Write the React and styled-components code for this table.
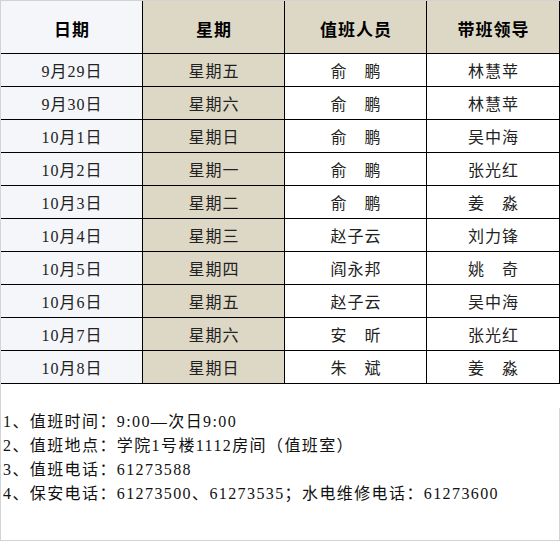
import React from "react";
import styled, { createGlobalStyle } from "styled-components";

const Global = createGlobalStyle`
  html, body { margin: 0; padding: 0; background: #ffffff; }
  * { box-sizing: border-box; }
`;

const Frame = styled.div`
  width: 560px;
  height: 541px;
  border-top: 1px solid #d3d3d3;
  border-left: 1px solid #d3d3d3;
  border-bottom: 1px solid #d3d3d3;
  display: flex;
  flex-direction: column;
  background: #ffffff;
  font-family: "Liberation Serif", "Noto Sans CJK SC", serif;
  color: #1a1a1a;
`;

const Grid = styled.div`
  display: grid;
  grid-template-columns: 142px 142px 142px 133px;
  grid-auto-rows: 33px;
  grid-template-rows: 53px;
`;

const tones = {
  date: "#f4f6fa",
  week: "#ddd8c5",
  plain: "#ffffff",
};

const Cell = styled.div`
  display: flex;
  align-items: center;
  justify-content: center;
  background: ${(p) => tones[p.$tone]};
  border-right: 1px solid #000;
  border-bottom: 1px solid #000;
  font-size: 16px;
  letter-spacing: 1px;
  padding-left: 1px;
  color: #222;
  white-space: pre;
`;

const HeadCell = styled(Cell)`
  font-size: 17px;
  font-weight: 700;
  color: #000;
  padding-top: 2px;
`;

const Notes = styled.div`
  flex: 1;
  display: flex;
  flex-direction: column;
  padding-top: 24px;
`;

const NotesBody = styled.div`
  flex: 1;
  border-right: 1px solid #d3d3d3;
  padding: 2px 0 0 2px;
  font-size: 16px;
  line-height: 24px;
  letter-spacing: 1.4px;
  color: #111;
`;

const Line = styled.div`
  white-space: nowrap;
`;

const rows = [
  ["9月29日", "星期五", "俞　鹏", "林慧苹"],
  ["9月30日", "星期六", "俞　鹏", "林慧苹"],
  ["10月1日", "星期日", "俞　鹏", "吴中海"],
  ["10月2日", "星期一", "俞　鹏", "张光红"],
  ["10月3日", "星期二", "俞　鹏", "姜　淼"],
  ["10月4日", "星期三", "赵子云", "刘力锋"],
  ["10月5日", "星期四", "阎永邦", "姚　奇"],
  ["10月6日", "星期五", "赵子云", "吴中海"],
  ["10月7日", "星期六", "安　昕", "张光红"],
  ["10月8日", "星期日", "朱　斌", "姜　淼"],
];

const notes = [
  "1、值班时间：9:00—次日9:00",
  "2、值班地点：学院1号楼1112房间（值班室）",
  "3、值班电话：61273588",
  "4、保安电话：61273500、61273535；水电维修电话：61273600",
];

export default function App() {
  return (
    <>
      <Global />
      <Frame>
        <Grid>
          <HeadCell $tone="date">日期</HeadCell>
          <HeadCell $tone="week">星期</HeadCell>
          <HeadCell $tone="week">值班人员</HeadCell>
          <HeadCell $tone="week">带班领导</HeadCell>
          {rows.map((r) => (
            <React.Fragment key={r[0]}>
              <Cell $tone="date">{r[0]}</Cell>
              <Cell $tone="week">{r[1]}</Cell>
              <Cell $tone="plain">{r[2]}</Cell>
              <Cell $tone="plain">{r[3]}</Cell>
            </React.Fragment>
          ))}
        </Grid>
        <Notes>
          <NotesBody>
            {notes.map((n) => (
              <Line key={n}>{n}</Line>
            ))}
          </NotesBody>
        </Notes>
      </Frame>
    </>
  );
}
